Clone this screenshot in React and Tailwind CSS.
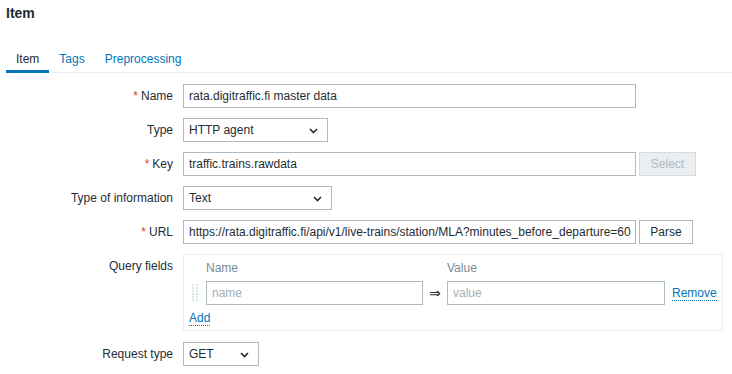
import React from "react";

const Chevron = () => (
  <svg width="9" height="6" viewBox="0 0 9 6" className="absolute right-[9px] top-[9px]">
    <path d="M1 1 L4.5 4.5 L8 1" fill="none" stroke="#1f2c33" strokeWidth="1.6" />
  </svg>
);

const Label = ({ children, req }) => (
  <div className="w-[167px] shrink-0 text-right leading-[24px] text-[12px] text-[#1f2c33]">
    {req && <span className="text-[#e33734] mr-[3px]">*</span>}
    {children}
  </div>
);

const Input = ({ value, w }) => (
  <div className={`h-[24px] ${w} border border-[#acbbc2] bg-white px-[5px] text-[12px] leading-[22px] text-[#1f2c33] whitespace-nowrap overflow-hidden`}>
    {value}
  </div>
);

const Select = ({ value, w }) => (
  <div className={`relative h-[24px] ${w} border border-[#acbbc2] bg-white px-[5px] text-[12px] leading-[22px] text-[#1f2c33]`}>
    {value}
    <Chevron />
  </div>
);

const DragHandle = () => (
  <svg width="6" height="18" viewBox="0 0 6 18">
    {[0, 3, 6, 9, 12, 15].map((y) => (
      <g key={y}>
        <rect x="0" y={y} width="2" height="2" fill="#dfe4e7" />
        <rect x="4" y={y} width="2" height="2" fill="#dfe4e7" />
      </g>
    ))}
  </svg>
);

export default function App() {
  return (
    <div className="w-[732px] h-[374px] bg-white overflow-hidden pl-[6px] font-['Liberation_Sans',Arial,sans-serif]">
      <div className="pt-[5px] text-[14px] leading-[16px] font-bold text-[#1f2c33]">Item</div>
      <div className="mt-[27px] flex border-b border-[#ebeef0] text-[12px] leading-[14px]">
        <div className="px-[10px] pt-[4px] pb-[4px] border-b-[3px] border-[#0275b8] -mb-[1px] text-[#1f2c33]">Item</div>
        <div className="px-[10px] pt-[4px] pb-[4px] text-[#0275b8]">Tags</div>
        <div className="px-[10px] pt-[4px] pb-[4px] text-[#0275b8]">Preprocessing</div>
      </div>

      <div className="mt-[11px] flex flex-col gap-[10px]">
        <div className="flex items-start gap-[10px]">
          <Label req>Name</Label>
          <Input value="rata.digitraffic.fi master data" w="w-[453px]" />
        </div>
        <div className="flex items-start gap-[10px]">
          <Label>Type</Label>
          <Select value="HTTP agent" w="w-[145px]" />
        </div>
        <div className="flex items-start gap-[10px]">
          <Label req>Key</Label>
          <Input value="traffic.trains.rawdata" w="w-[453px]" />
          <div className="-ml-[7px] h-[24px] w-[57px] border border-[#d4dbdf] bg-[#ebeef0] text-center text-[12px] leading-[22px] text-[#acbbc2]">Select</div>
        </div>
        <div className="flex items-start gap-[10px]">
          <Label>Type of information</Label>
          <Select value="Text" w="w-[149px]" />
        </div>
        <div className="flex items-start gap-[10px]">
          <Label req>URL</Label>
          <Input value="https://rata.digitraffic.fi/api/v1/live-trains/station/MLA?minutes_before_departure=60" w="w-[453px]" />
          <div className="-ml-[7px] h-[24px] w-[54px] border border-[#acbbc2] bg-white text-center text-[12px] leading-[22px] text-[#1f2c33]">Parse</div>
        </div>
        <div className="flex items-start gap-[10px]">
          <Label>Query fields</Label>
          <div className="w-[540px] h-[77px] border border-[#ebeef0] pt-[6px] pl-[5px] text-[12px]">
            <div className="flex leading-[14px] text-[#768d99]">
              <div className="w-[17px]" />
              <div className="w-[217px]">Name</div>
              <div className="w-[24px]" />
              <div>Value</div>
            </div>
            <div className="mt-[6px] flex items-center">
              <div className="w-[17px] pl-[3px] flex items-center"><DragHandle /></div>
              <div className="h-[24px] w-[217px] border border-[#acbbc2] px-[5px] leading-[22px] text-[#a3b1b8]">name</div>
              <div className="w-[24px] text-center text-[14px] text-[#1f2c33]">⇒</div>
              <div className="h-[24px] w-[218px] border border-[#acbbc2] px-[5px] leading-[22px] text-[#a3b1b8]">value</div>
              <div className="ml-[7px] relative text-[#0275b8] leading-[14px] border-b border-dotted border-[#0275b8]">
                Remove
              </div>
            </div>
            <div className="mt-[6px] inline-block text-[#0275b8] leading-[14px] border-b border-dotted border-[#0275b8]">Add</div>
          </div>
        </div>
        <div className="flex items-start gap-[10px] mt-[1px]">
          <Label>Request type</Label>
          <Select value="GET" w="w-[76px]" />
        </div>
      </div>
    </div>
  );
}
